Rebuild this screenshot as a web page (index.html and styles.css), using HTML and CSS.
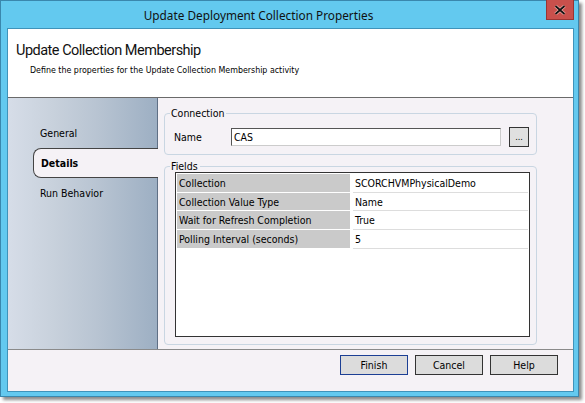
FILE: index.html
```html
<!DOCTYPE html>
<html lang="en">
<head>
  <meta charset="UTF-8">
  <title>Update Deployment Collection Properties</title>
  <link rel="stylesheet" href="styles.css">
</head>
<body>
  <div class="window">
    <div class="titlebar">
      <span class="title">Update Deployment Collection Properties</span>
      <div class="close">
        <svg width="12" height="10" viewBox="0 0 12 10"><path d="M1.5 1 L10.5 9 M10.5 1 L1.5 9" stroke="#f4b4b0" stroke-width="3.2"/><path d="M1.5 1 L10.5 9 M10.5 1 L1.5 9" stroke="#111" stroke-width="1.7"/></svg>
      </div>
    </div>

    <div class="client">
      <div class="header">
        <div class="header-title">Update Collection Membership</div>
        <div class="header-sub">Define the properties for the Update Collection Membership activity</div>
      </div>

      <div class="main">
        <div class="nav">
          <div class="nav-item">General</div>
          <div class="nav-item selected">Details</div>
          <div class="nav-item">Run Behavior</div>
        </div>

        <div class="content">
          <fieldset class="group connection">
            <legend>Connection</legend>
            <div class="conn-row">
              <span class="conn-label">Name</span>
              <div class="input">CAS</div>
              <div class="dots">...</div>
            </div>
          </fieldset>

          <fieldset class="group fields">
            <legend>Fields</legend>
            <div class="grid">
              <div class="row"><div class="key">Collection</div><div class="val">SCORCHVMPhysicalDemo</div></div>
              <div class="row"><div class="key">Collection Value Type</div><div class="val">Name</div></div>
              <div class="row"><div class="key">Wait for Refresh Completion</div><div class="val">True</div></div>
              <div class="row"><div class="key">Polling Interval (seconds)</div><div class="val">5</div></div>
            </div>
          </fieldset>
        </div>
      </div>

      <div class="footer">
        <button class="btn default">Finish</button>
        <button class="btn">Cancel</button>
        <button class="btn">Help</button>
      </div>
    </div>
  </div>
</body>
</html>
```

FILE: styles.css
```css
html, body {
  margin: 0;
  padding: 0;
  background: #fff;
}

body {
  width: 585px;
  height: 403px;
  font-family: 'DejaVu Sans Condensed', 'Liberation Sans', sans-serif;
  font-size: 10.5px;
  color: #000;
}

.window {
  width: 577px;
  height: 395px;
  background: #63c9ef;
  border: 1px solid #3a87ad;
  box-shadow: 3px 3px 3px rgba(0,0,0,0.45);
  display: flex;
  flex-direction: column;
}

.titlebar {
  height: 27px;
  position: relative;
  display: flex;
  align-items: center;
  justify-content: center;
  padding-right: 62px;
}

.title {
  font-family: 'Noto Sans', 'Open Sans', sans-serif;
  font-size: 11.8px;
  color: #111;
  margin-top: 1px;
}

.close {
  position: absolute;
  top: -1px;
  right: 4px;
  width: 28px;
  height: 20px;
  background: #c9504c;
  border: 1px solid #9a3533;
  border-top: none;
  box-sizing: border-box;
  display: flex;
  align-items: center;
  justify-content: center;
}

.client {
  margin: 0 4px 4px 6px;
  flex: 1;
  background: #f5f2f6;
  border: 1px solid #3f93ba;
  display: flex;
  flex-direction: column;
}

.header {
  height: 69px;
  background: #fff;
  border-bottom: 1px solid #6a6a6a;
  box-sizing: border-box;
  padding: 11px 0 0 8px;
}

.header-title {
  font-family: Roboto, 'Noto Sans', sans-serif;
  font-size: 14.5px;
  letter-spacing: -0.5px;
  color: #111;
  line-height: 22px;
}

.header-sub {
  font-size: 8.8px;
  margin: 3px 0 0 14px;
}

.main {
  height: 251px;
  display: flex;
  border-bottom: 1px solid #8a8a8a;
}

.nav {
  width: 150px;
  border-right: 1px solid #5f6f85;
  background: linear-gradient(90deg, #d6dde8 0%, #c8d1dc 30%, #b8c4d2 60%, #9dafc3 100%);
  padding-top: 20px;
  box-sizing: border-box;
}

.nav-item {
  height: 30px;
  line-height: 30px;
  padding-left: 32px;
}

.nav-item.selected {
  margin-left: 25px;
  margin-right: -1px;
  padding-left: 7px;
  background: #f5f2f6;
  border: 1px solid #444;
  border-right: none;
  border-radius: 8px 0 0 8px;
  height: 28px;
  line-height: 28px;
  font-weight: bold;
  position: relative;
}

.content {
  flex: 1;
  padding: 10px 36px 4px 6px;
  display: flex;
  flex-direction: column;
  gap: 6px;
}

.group {
  margin: 0;
  border: 1px solid #c9d6e2;
  border-radius: 4px;
  padding: 0;
}

.group legend {
  margin-left: 5px;
  padding: 0 2px 0 1px;
  line-height: 10px;
}

.conn-row {
  display: flex;
  align-items: center;
  height: 34px;
  padding: 2px 0 0 9px;
}

.conn-label {
  width: 57px;
}

.input {
  width: 266px;
  height: 16px;
  background: #fff;
  border: 1px solid #555;
  border-right-color: #ccc;
  border-bottom-color: #ccc;
  padding-left: 2px;
  line-height: 16px;
}

.dots {
  margin-left: 8px;
  width: 20px;
  height: 20px;
  background: #e0e0e0;
  border: 1px solid #333;
  box-sizing: border-box;
  text-align: center;
  line-height: 18px;
  font-size: 9px;
}

.fields {
  flex: 1;
  display: flex;
}

.grid {
  flex: 1;
  margin: 1px 6px 7px 10px;
  background: #fff;
  border: 1px solid #333;
  padding: 1px;
}

.row {
  display: flex;
  height: 18.7px;
  line-height: 18px;
}

.key {
  width: 173px;
  margin-right: 3px;
  padding-left: 2px;
  box-sizing: border-box;
  background: #cacaca;
  border-bottom: 1px solid #fff;
}

.val {
  flex: 1;
  padding-left: 2px;
  border-bottom: 1px solid #ddd;
}

.footer {
  flex: 1;
  display: flex;
  justify-content: flex-end;
  align-items: flex-start;
  gap: 7px;
  padding: 5px 15px 0 0;
}

.btn {
  width: 68px;
  height: 20px;
  background: #dcdcdc;
  border: 1px solid #333;
  font-family: 'DejaVu Sans Condensed', 'Liberation Sans', sans-serif;
  font-size: 10.5px;
  padding: 0;
}

.btn.default {
  border-color: #1c3f94;
}
```
